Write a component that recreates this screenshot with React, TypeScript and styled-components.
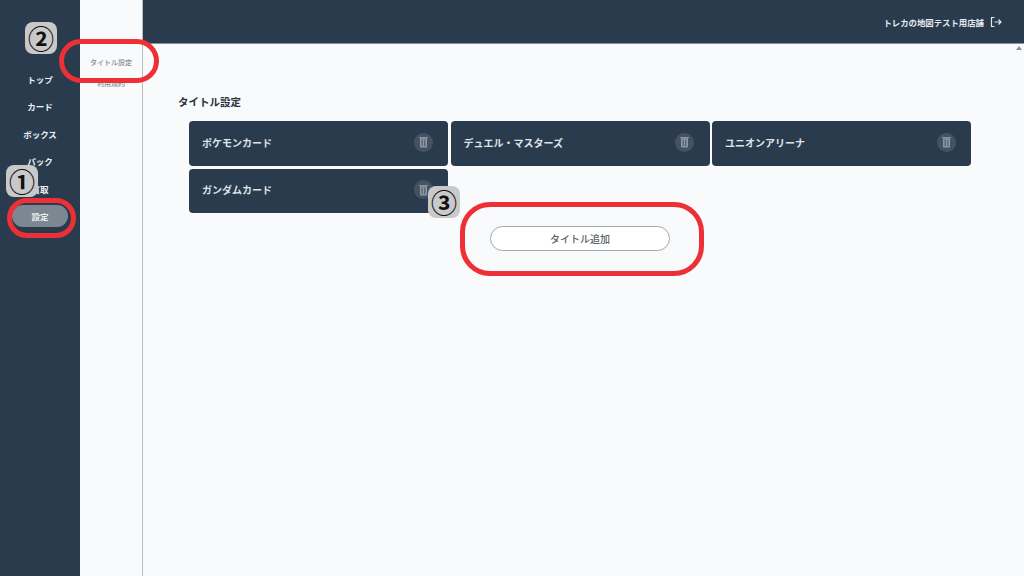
import styled, { createGlobalStyle } from 'styled-components';

const GlobalStyle = createGlobalStyle`
  html, body {
    margin: 0;
    padding: 0;
    background: #f8fafc;
  }
  * {
    box-sizing: border-box;
  }
`;

const FONT = `"Noto Sans CJK JP", "Noto Sans", sans-serif`;
const NAVY = '#2b3b4e';

const navItems = ['トップ', 'カード', 'ボックス', 'パック', '買取', '設定'];
const titles = ['ポケモンカード', 'デュエル・マスターズ', 'ユニオンアリーナ', 'ガンダムカード'];

const Page = styled.div`
  position: relative;
  display: flex;
  width: 1024px;
  height: 576px;
  overflow: hidden;
  font-family: ${FONT};
  background: #f8fafc;
`;

const Sidebar = styled.nav`
  width: 80px;
  flex-shrink: 0;
  background: ${NAVY};
  display: flex;
  flex-direction: column;
  align-items: center;
  padding-top: 68px;
  gap: 5.4px;
`;

const NavItem = styled.div<{ $active?: boolean }>`
  width: 56px;
  height: 22px;
  border-radius: 11px;
  display: flex;
  align-items: center;
  justify-content: center;
  color: #eef1f4;
  font-size: 8.5px;
  font-weight: 700;
  background: ${(p) => (p.$active ? '#7d8791' : 'transparent')};
`;

const SubNav = styled.div`
  width: 63px;
  flex-shrink: 0;
  background: #f8fafc;
  border-right: 1px solid #b9bdc2;
  display: flex;
  flex-direction: column;
  align-items: center;
  padding-top: 56px;
  gap: 9px;
`;

const SubItem = styled.div`
  color: #868b92;
  font-size: 7px;
  font-weight: 500;
  line-height: 12px;
`;

const Main = styled.div`
  flex: 1;
  display: flex;
  flex-direction: column;
  min-width: 0;
`;

const Header = styled.header`
  height: 44px;
  flex-shrink: 0;
  background: ${NAVY};
  border-bottom: 1px solid #8592a0;
  display: flex;
  align-items: center;
  justify-content: flex-end;
  gap: 6px;
  padding-right: 22px;
  color: #e6eaee;
  font-size: 8.4px;
  font-weight: 700;
`;

const ScrollArrow = styled.div`
  position: absolute;
  left: 1016px;
  top: 46px;
  width: 0;
  height: 0;
  border-left: 3px solid transparent;
  border-right: 3px solid transparent;
  border-bottom: 4px solid #8d9196;
`;

const Content = styled.main`
  flex: 1;
  padding: 50px 53px 0 35px;
`;

const Title = styled.h2`
  margin: 0 0 11px;
  font-size: 10.5px;
  font-weight: 700;
  line-height: 16px;
  color: #2b333d;
`;

const CardGrid = styled.div`
  margin-left: 11px;
  display: grid;
  grid-template-columns: repeat(3, 259px);
  grid-auto-rows: 44.5px;
  column-gap: 2.5px;
  row-gap: 3px;
`;

const Card = styled.div`
  display: flex;
  align-items: center;
  justify-content: space-between;
  padding: 0 15.5px 2px 13px;
  background: ${NAVY};
  border-radius: 4px;
  color: #dfe4e9;
  font-size: 10px;
  font-weight: 700;
`;

const TrashButton = styled.span`
  width: 19px;
  height: 19px;
  border-radius: 50%;
  background: rgba(255, 255, 255, 0.12);
  display: flex;
  align-items: center;
  justify-content: center;
`;

const ButtonRow = styled.div`
  margin: 13px 0 0 11px;
  width: 782px;
  display: flex;
  justify-content: center;
`;

const AddButton = styled.button`
  width: 180px;
  height: 25px;
  border: 1px solid #a4a8ad;
  border-radius: 13px;
  background: #fff;
  color: #5a5f66;
  font-family: ${FONT};
  font-size: 10px;
  font-weight: 500;
  padding: 0;
`;

const Ring = styled.div<{ $x: number; $y: number; $w: number; $h: number; $r: number }>`
  position: absolute;
  left: ${(p) => p.$x}px;
  top: ${(p) => p.$y}px;
  width: ${(p) => p.$w}px;
  height: ${(p) => p.$h}px;
  border: 5px solid #ec3035;
  border-radius: ${(p) => p.$r}px;
`;

const Badge = styled.div<{ $x: number; $y: number }>`
  position: absolute;
  left: ${(p) => p.$x}px;
  top: ${(p) => p.$y}px;
  width: 32px;
  height: 32px;
  border-radius: 8px;
  background: #c9c9c9;
  color: #111;
  font-size: 26px;
  font-weight: 700;
  line-height: 32px;
  text-align: center;
`;

const TrashIcon = () => (
  <svg width="11" height="12" viewBox="0 0 11 12" fill="none">
    <path d="M1 1.6h9" stroke="#8f9aa5" strokeWidth="1" />
    <path d="M2 2.2h7v8.6a.8.8 0 0 1-.8.8H2.8a.8.8 0 0 1-.8-.8z" fill="#8f9aa5" />
    <path d="M4.2 3.6v6.6M6.8 3.6v6.6" stroke="#46566a" strokeWidth="1.1" />
  </svg>
);

const LogoutIcon = () => (
  <svg width="12" height="12" viewBox="0 0 12 12" fill="none" stroke="#e6eaee" strokeWidth="1.2">
    <path d="M4.5 1.5H1.5v9h3" />
    <path d="M4.5 6H11M8.5 3.5 11 6 8.5 8.5" />
  </svg>
);

const App = () => {
  return (
    <Page>
      <GlobalStyle />
      <Sidebar>
        {navItems.map((item) => (
          <NavItem key={item} $active={item === '設定'}>
            {item}
          </NavItem>
        ))}
      </Sidebar>
      <SubNav>
        <SubItem>タイトル設定</SubItem>
        <SubItem>利用規約</SubItem>
      </SubNav>
      <Main>
        <Header>
          <span>トレカの地図テスト用店舗</span>
          <LogoutIcon />
        </Header>
        <Content>
          <Title>タイトル設定</Title>
          <CardGrid>
            {titles.map((title) => (
              <Card key={title}>
                {title}
                <TrashButton>
                  <TrashIcon />
                </TrashButton>
              </Card>
            ))}
          </CardGrid>
          <ButtonRow>
            <AddButton>タイトル追加</AddButton>
          </ButtonRow>
        </Content>
      </Main>

      <ScrollArrow />
      <Ring $x={7} $y={198} $w={69} $h={40} $r={20} />
      <Ring $x={59} $y={39} $w={100} $h={44} $r={22} />
      <Ring $x={460} $y={202} $w={244} $h={74} $r={30} />
      <Badge $x={6} $y={165}>①</Badge>
      <Badge $x={25} $y={22}>②</Badge>
      <Badge $x={428} $y={186}>③</Badge>
    </Page>
  );
};

export default App;
